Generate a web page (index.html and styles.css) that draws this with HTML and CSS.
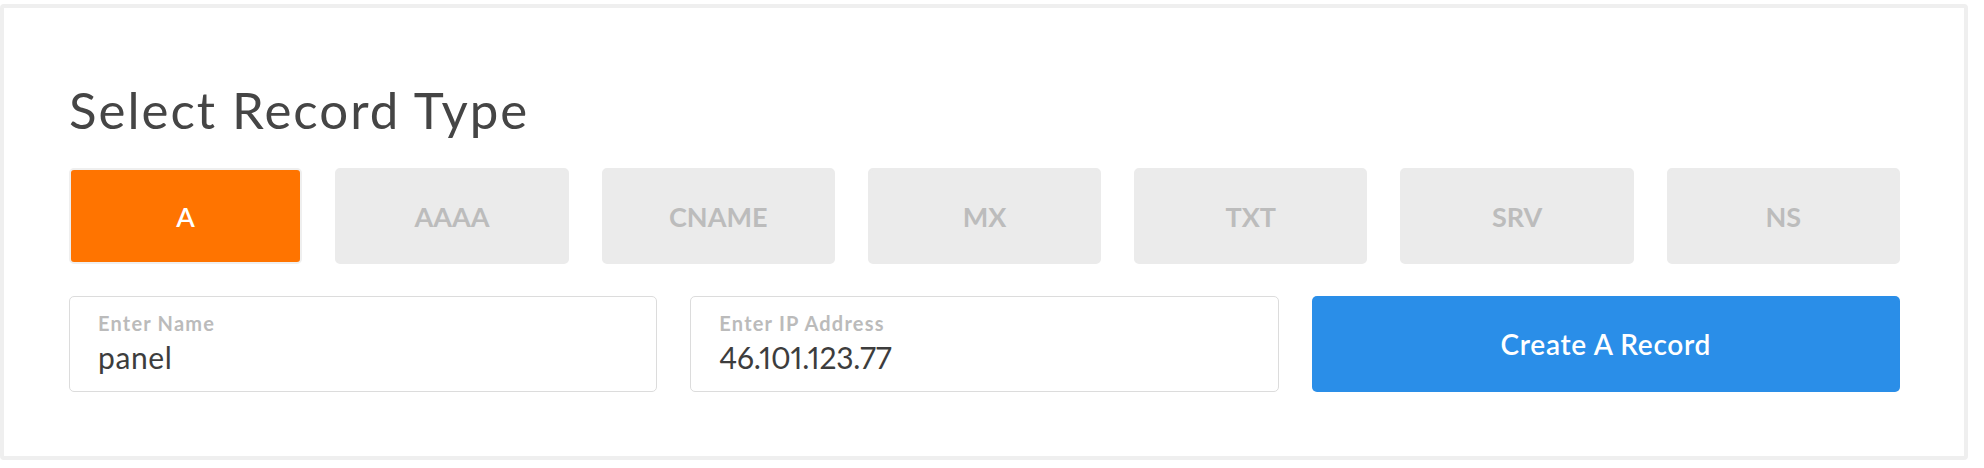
FILE: index.html
```html
<!DOCTYPE html>
<html lang="en">
<head>
<meta charset="utf-8">
<title>Select Record Type</title>
<link rel="stylesheet" href="styles.css">
</head>
<body>
<section class="card">
  <h1 class="title">Select Record Type</h1>
  <div class="types">
    <button class="type type-active" type="button">A</button>
    <button class="type" type="button">AAAA</button>
    <button class="type" type="button">CNAME</button>
    <button class="type" type="button">MX</button>
    <button class="type" type="button">TXT</button>
    <button class="type" type="button">SRV</button>
    <button class="type" type="button">NS</button>
  </div>
  <div class="form-row">
    <label class="field">
      <span class="field-label">Enter Name</span>
      <input class="field-input" type="text" value="panel">
    </label>
    <label class="field">
      <span class="field-label">Enter IP Address</span>
      <input class="field-input field-input-numeric" type="text" value="46.101.123.77">
    </label>
    <button class="create" type="button">Create A Record</button>
  </div>
</section>
</body>
</html>
```
FILE: styles.css
```css
html, body {
  margin: 0;
  padding: 0;
  background: #ffffff;
}

body {
  font-family: Lato, "Open Sans", Arial, sans-serif;
  color: #464646;
}

.card {
  box-sizing: border-box;
  margin: 4px 16px 0 0;
  height: 456px;
  border: 4px solid #efefef;
  border-radius: 4px;
  padding: 72px 64px 64px 65px;
  background: #fff;
}

.title {
  margin: 0;
  font-size: 51px;
  line-height: 60px;
  font-weight: 400;
  letter-spacing: 2px;
  color: #454545;
}

.types {
  display: grid;
  grid-template-columns: repeat(7, 1fr);
  gap: 33px;
  margin-top: 28px;
}

.type {
  box-sizing: border-box;
  height: 96px;
  margin: 0;
  padding: 0;
  border: 2px solid #ebebeb;
  border-radius: 5px;
  background: #ebebeb;
  color: #bcbcbc;
  font-family: Lato, "Open Sans", Arial, sans-serif;
  font-size: 27px;
  font-weight: 700;
  display: flex;
  align-items: center;
  justify-content: center;
  cursor: pointer;
}

.type-active {
  background: #ff7400;
  border-color: #efefef;
  color: #ffffff;
  font-weight: 600;
}

.form-row {
  display: grid;
  grid-template-columns: repeat(3, 1fr);
  gap: 33px;
  margin-top: 32px;
}

.field {
  box-sizing: border-box;
  height: 96px;
  border: 1.5px solid #dcdcdc;
  border-radius: 5px;
  padding: 14px 28px 0 28px;
  display: flex;
  flex-direction: column;
}

.field-label {
  font-size: 20px;
  line-height: 24px;
  font-weight: 700;
  letter-spacing: 1.2px;
  color: #bbbbbb;
}

.field-input {
  margin: 4px 0 0 0;
  padding: 0;
  border: 0;
  outline: none;
  background: transparent;
  font-family: Lato, "Open Sans", Arial, sans-serif;
  font-size: 30px;
  line-height: 36px;
  height: 36px;
  letter-spacing: 0.6px;
  font-variant-numeric: proportional-nums;
  color: #3d3d3d;
  width: 100%;
}

.field-input-numeric {
  letter-spacing: -0.2px;
}

.create {
  box-sizing: border-box;
  height: 96px;
  margin: 0;
  border: 0;
  border-radius: 5px;
  background: #2a8ee8;
  color: #ffffff;
  font-family: Lato, "Open Sans", Arial, sans-serif;
  font-size: 28px;
  font-weight: 600;
  letter-spacing: 0.7px;
  display: flex;
  align-items: center;
  justify-content: center;
  cursor: pointer;
}
```
